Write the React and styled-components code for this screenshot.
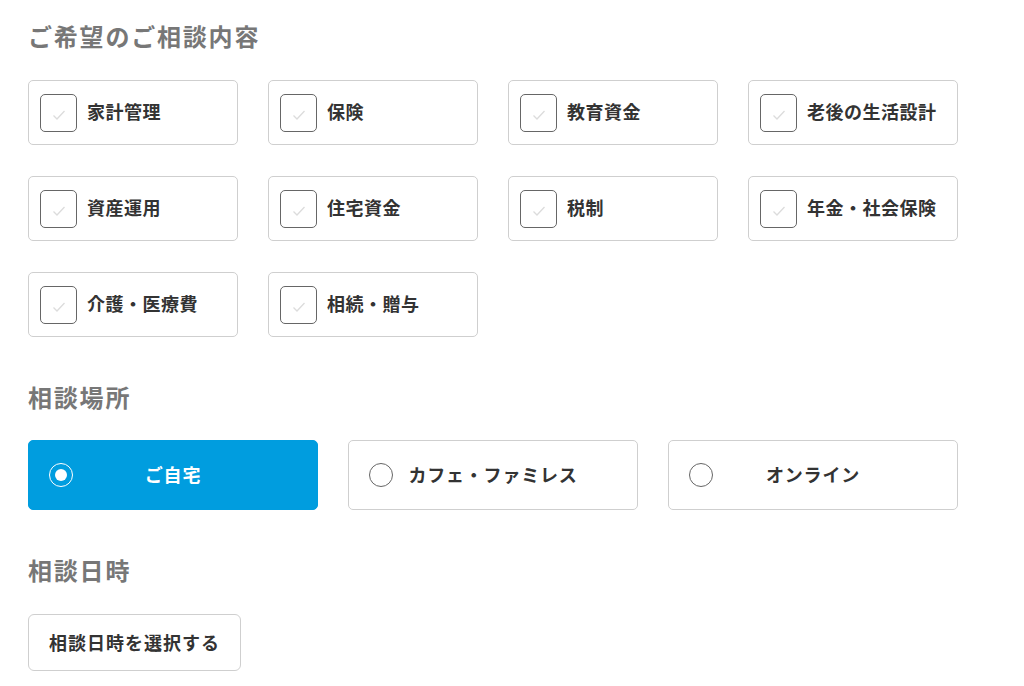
import React, { useState } from 'react';
import styled, { createGlobalStyle } from 'styled-components';

const GlobalStyle = createGlobalStyle`
    body {
        margin: 0;
        background: #fff;
        font-family: "Noto Sans CJK JP", "Noto Sans", sans-serif;
        color: #333;
    }
`;

const Page = styled.div`
    padding: 18px 28px 0;
    width: 930px;
`;

const Heading = styled.h2`
    margin: ${({ first }) => (first ? '0' : '42px')} 0 ${({ first }) => (first ? '26px' : '25px')};
    font-size: 24px;
    line-height: 36px;
    font-weight: 700;
    letter-spacing: 1.8px;
    color: #777;
`;

const TopicGrid = styled.div`
    display: grid;
    grid-template-columns: repeat(4, 210px);
    column-gap: 30px;
    row-gap: 31px;
`;

const TopicCard = styled.label`
    display: flex;
    align-items: center;
    gap: 10px;
    height: 65px;
    padding: 0 11px;
    box-sizing: border-box;
    border: 1px solid #cfcfcf;
    border-radius: 5px;
    background: #fff;
    cursor: pointer;
`;

const CheckBox = styled.span`
    display: flex;
    align-items: center;
    justify-content: center;
    width: 37px;
    height: 38px;
    box-sizing: border-box;
    border: 1.5px solid ${({ checked }) => (checked ? '#009ddf' : '#666')};
    border-radius: 5px;
    background: #fff;
    flex-shrink: 0;
`;

const Label = styled.span`
    padding-bottom: 3px;
    font-size: 18px;
    font-weight: 700;
    letter-spacing: 0.5px;
    color: #333;
    white-space: nowrap;
`;

const PlaceRow = styled.div`
    display: grid;
    grid-template-columns: repeat(3, 290px);
    column-gap: 30px;
`;

const PlaceButton = styled.button`
    display: grid;
    grid-template-columns: 24px 1fr 24px;
    align-items: center;
    height: 70px;
    padding: 0 20px;
    box-sizing: border-box;
    border: 1px solid ${({ active }) => (active ? '#009ddf' : '#cfcfcf')};
    border-radius: 5px;
    background: ${({ active }) => (active ? '#009ddf' : '#fff')};
    color: ${({ active }) => (active ? '#fff' : '#333')};
    font-family: inherit;
    font-size: 18px;
    font-weight: 700;
    letter-spacing: 0.8px;
    cursor: pointer;
    text-align: center;
`;

const Radio = styled.span`
    display: flex;
    align-items: center;
    justify-content: center;
    width: 24px;
    height: 24px;
    box-sizing: border-box;
    border-radius: 50%;
    border: 1.5px solid ${({ active }) => (active ? '#fff' : '#666')};
    background: ${({ active }) => (active ? '#009ddf' : '#fff')};

    &::after {
        content: '';
        display: ${({ active }) => (active ? 'block' : 'none')};
        width: 12px;
        height: 12px;
        border-radius: 50%;
        background: #fff;
    }
`;

const PlaceText = styled.span`
    white-space: nowrap;
    padding-bottom: 3px;
`;

const DateButton = styled.button`
    width: 213px;
    height: 57px;
    margin-top: 1px;
    padding-bottom: 3px;
    border: 1px solid #cfcfcf;
    border-radius: 6px;
    background: #fff;
    font-family: inherit;
    font-size: 18px;
    font-weight: 700;
    letter-spacing: 1px;
    color: #333;
    cursor: pointer;
`;

const topics = [
    '家計管理', '保険', '教育資金', '老後の生活設計',
    '資産運用', '住宅資金', '税制', '年金・社会保険',
    '介護・医療費', '相続・贈与',
];

const places = ['ご自宅', 'カフェ・ファミレス', 'オンライン'];

const Check = ({ on }) => (
    <svg width="14" height="12" viewBox="0 0 14 12" style={{ marginTop: 4 }}>
        <path d="M1.5 6.5 L5 10 L12.5 2" fill="none" stroke={on ? '#009ddf' : '#dcdcdc'} strokeWidth="1.3" />
    </svg>
);

export default function App() {
    const [checked, setChecked] = useState([]);
    const [place, setPlace] = useState(0);

    const toggle = (t) => {
        setChecked(checked.includes(t) ? checked.filter((x) => x !== t) : [...checked, t]);
    };

    return (
        <Page>
            <GlobalStyle />
            <Heading first>ご希望のご相談内容</Heading>
            <TopicGrid>
                {topics.map((t) => (
                    <TopicCard key={t} onClick={() => toggle(t)}>
                        <CheckBox checked={checked.includes(t)}>
                            <Check on={checked.includes(t)} />
                        </CheckBox>
                        <Label>{t}</Label>
                    </TopicCard>
                ))}
            </TopicGrid>

            <Heading>相談場所</Heading>
            <PlaceRow>
                {places.map((p, i) => (
                    <PlaceButton key={p} active={place === i} onClick={() => setPlace(i)}>
                        <Radio active={place === i} />
                        <PlaceText>{p}</PlaceText>
                        <span />
                    </PlaceButton>
                ))}
            </PlaceRow>

            <Heading>相談日時</Heading>
            <DateButton>相談日時を選択する</DateButton>
        </Page>
    );
}
